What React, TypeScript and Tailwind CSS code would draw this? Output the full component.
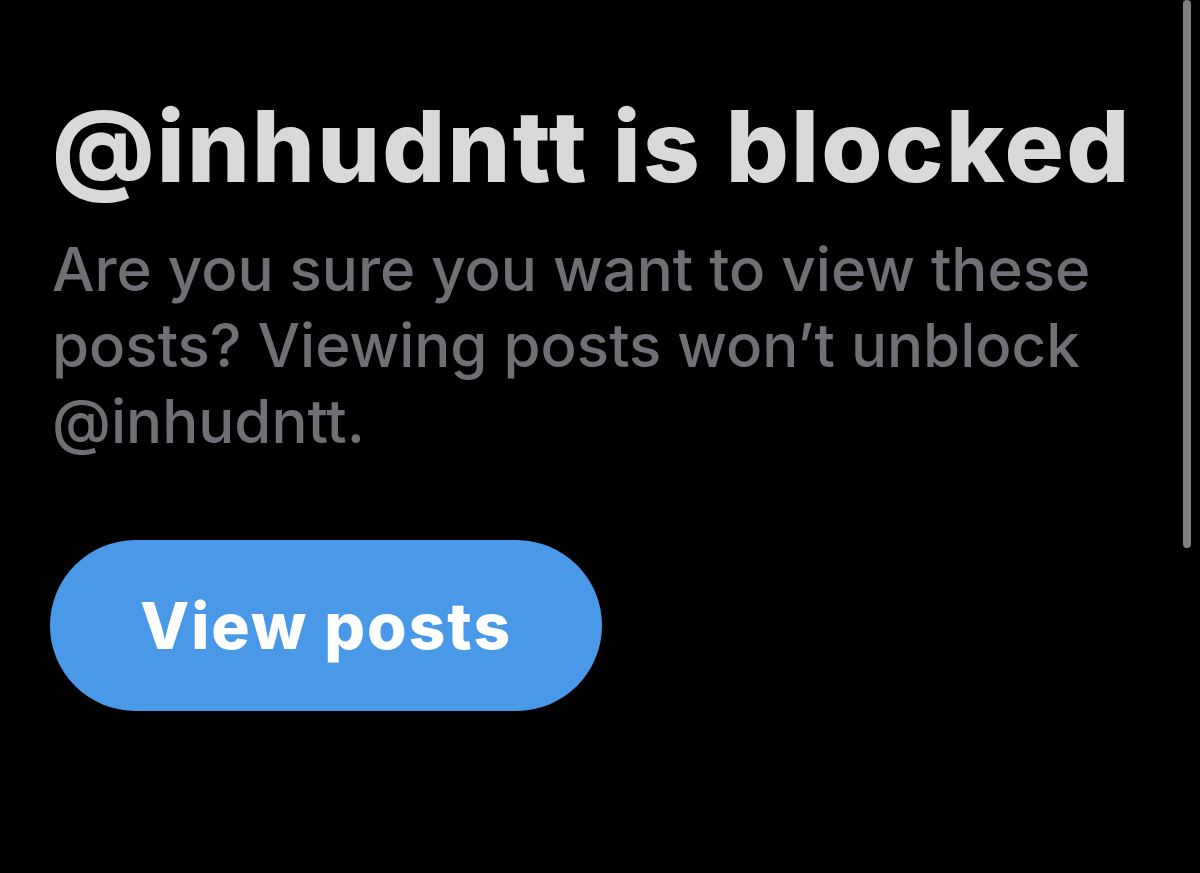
import React from "react";

const App = () => {
  return (
    <div className="relative bg-black h-[873px] w-[1200px] overflow-hidden font-['Inter','Liberation_Sans',sans-serif]">
      <div className="pl-[52px] pr-[60px] pt-[91px]">
        <h1 className="font-extrabold text-[99px] leading-[110px] tracking-[2.2px] text-[#d9d9d9] whitespace-nowrap">
          @inhudntt is blocked
        </h1>
        <p className="mt-[30px] font-medium text-[60px] leading-[76px] text-[#6e7076] w-[1100px]">
          Are you sure you want to view these posts? Viewing posts won’t unblock @inhudntt.
        </p>
        <button className="mt-[81px] ml-[-2px] w-[552px] h-[171px] rounded-full bg-[#4a99e8] text-white font-extrabold text-[64px] tracking-[2px]">
          View posts
        </button>
      </div>
      <div className="absolute right-[9px] top-0 h-[548px] w-[8px] rounded-full bg-[#808080]" />
    </div>
  );
};

export default App;
